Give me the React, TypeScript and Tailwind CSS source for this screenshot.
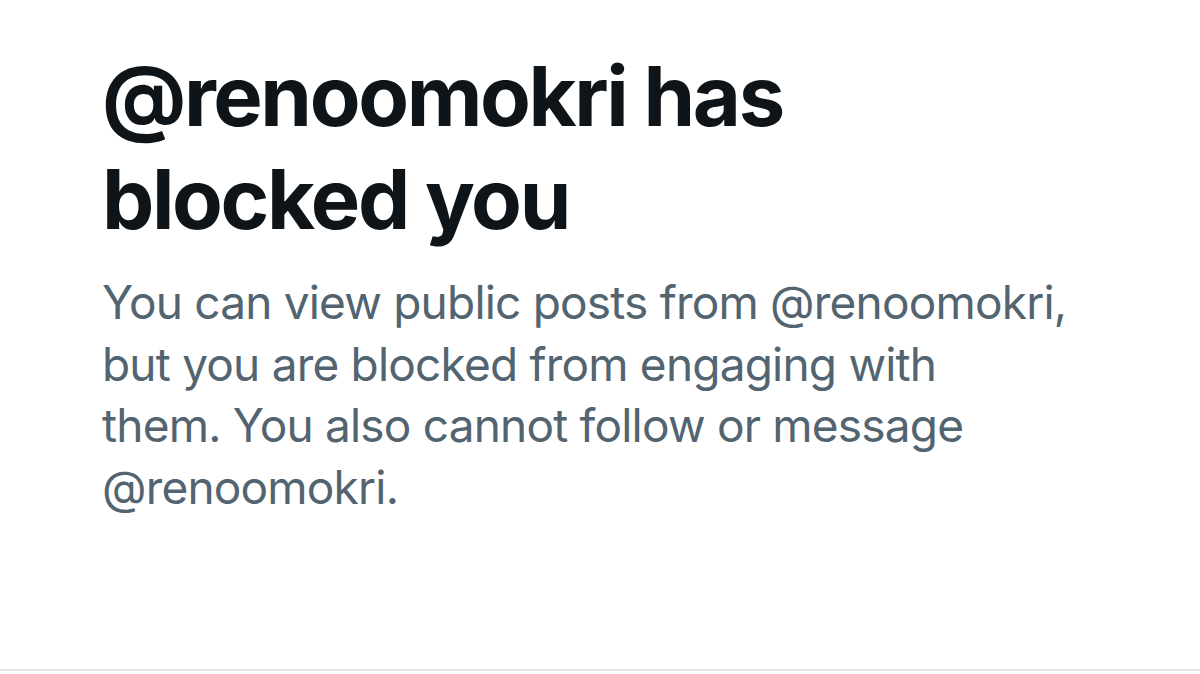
export default function App() {
  return (
    <div className="w-[1200px] h-[674px] bg-white flex flex-col overflow-hidden" style={{ fontFamily: 'Inter, "Noto Sans", sans-serif' }}>
      <div className="flex-1 pl-[102px] pt-[45px]">
        <h1 className="text-[#0f1419] font-bold text-[83px] leading-[103px] tracking-[-2.4px]">
          @renoomokri has
          <br />
          blocked you
        </h1>
        <p className="mt-[21px] text-[#536471] text-[46px] leading-[61.5px] tracking-[-0.8px]">
          You can view public posts from @renoomokri,
          <br />
          but you are blocked from engaging with
          <br />
          them. You also cannot follow or message
          <br />
          @renoomokri.
        </p>
      </div>
      <div className="h-[2px] bg-[#e3e5ea] mb-[3px]" />
    </div>
  );
}
